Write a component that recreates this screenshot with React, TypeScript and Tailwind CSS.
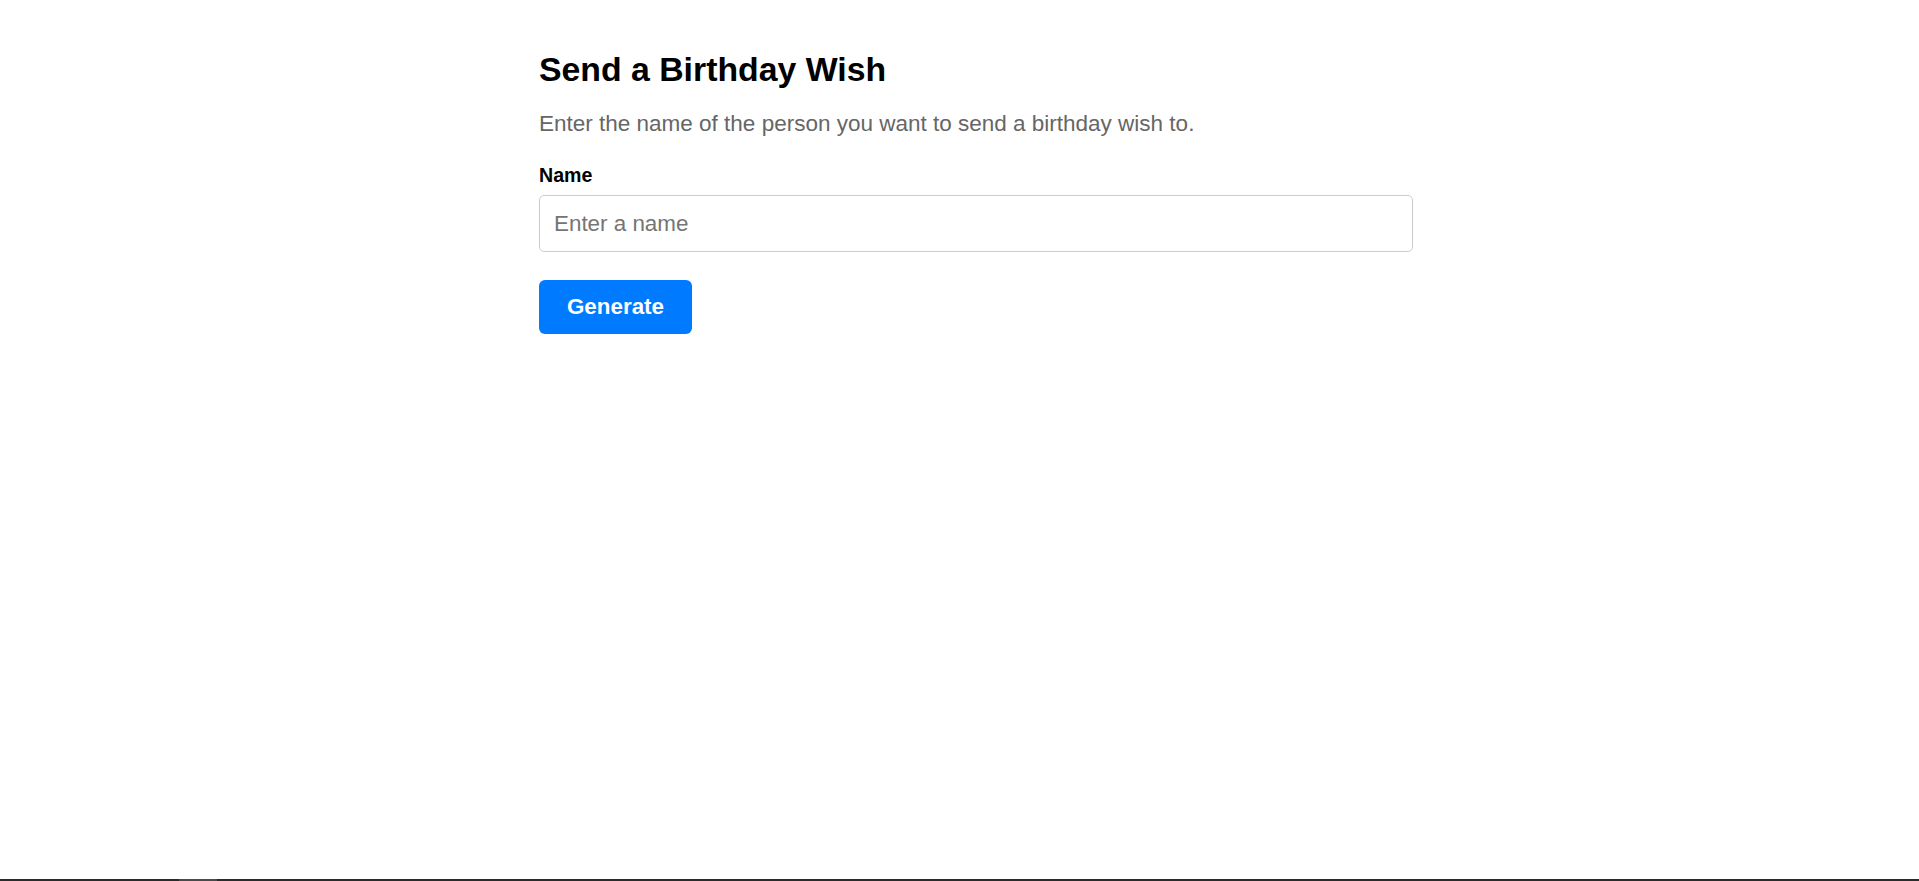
import React from 'react';

const App = () => {
  return (
    <div className="h-[881px] flex flex-col bg-white" style={{ fontFamily: '"Liberation Sans", Arial, sans-serif' }}>
      <div className="flex-1 pl-[539px] pt-[49px]">
        <div className="w-[874px] flex flex-col">
          <h1 className="text-[33.8px] leading-[40px] font-bold text-black">Send a Birthday Wish</h1>
          <p className="mt-[21px] text-[22.5px] leading-[28px] text-[#666666]">
            Enter the name of the person you want to send a birthday wish to.
          </p>
          <label htmlFor="name" className="mt-[25px] text-[19.6px] leading-[24px] font-bold text-black">
            Name
          </label>
          <input
            id="name"
            type="text"
            placeholder="Enter a name"
            className="mt-[8px] h-[57px] w-full rounded-[5px] border border-[#cccccc] px-[14px] text-[22.4px] text-black placeholder:text-[#757575] outline-none"
          />
          <div className="mt-[28px]">
            <button className="h-[54px] w-[153px] rounded-[6px] bg-[#007bff] text-[22.4px] font-bold text-white">
              Generate
            </button>
          </div>
        </div>
      </div>
      {/* thin bar along the bottom edge */}
      <div className="h-[2px] bg-[#2b2b2b] pl-[179px]">
        <div className="h-full w-[38px] bg-[#4a4a4a]" />
      </div>
    </div>
  );
};

export default App;
